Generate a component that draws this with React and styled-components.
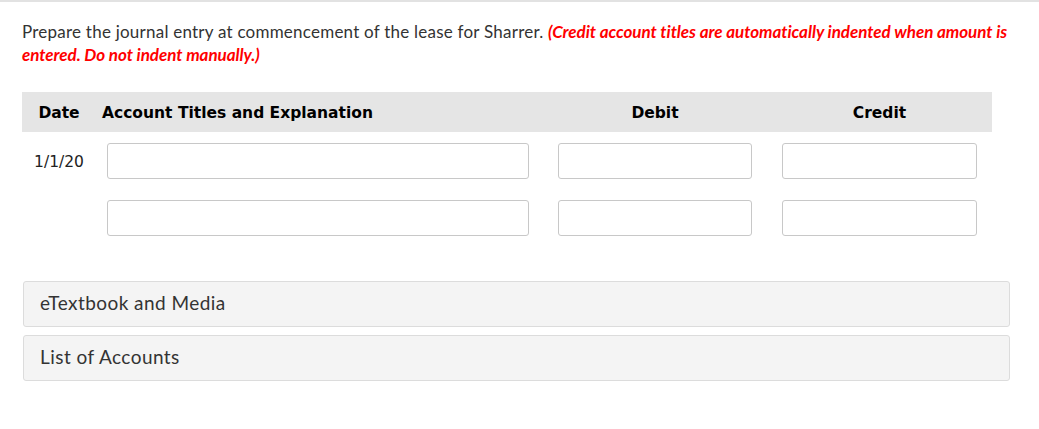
import React from "react";
import styled, { createGlobalStyle } from "styled-components";

const Global = createGlobalStyle`
  html, body { margin: 0; padding: 0; background: #fff; }
  body { font-family: Lato, "Open Sans", sans-serif; }
`;

const Page = styled.div`
  border-top: 2px solid #e2e2e2;
  padding: 18px 29px 40px 22px;
`;

const Prompt = styled.p`
  margin: 0 -8px 0 0;
  font-family: Lato, sans-serif;
  font-size: 17px;
  letter-spacing: 0.23px;
  line-height: 23px;
  color: #333;
`;

const Note = styled.span`
  color: #ff0000;
  font-weight: 700;
  font-style: italic;
  letter-spacing: -0.04px;
`;

const Table = styled.div`
  margin-top: 26px;
  width: 970px;
  display: grid;
  grid-template-columns: 74px 447px 224px 225px;
`;

const HeadCell = styled.div`
  background: #e5e5e5;
  height: 40px;
  box-sizing: border-box;
  padding-top: 2px;
  display: flex;
  align-items: center;
  justify-content: ${(p) => (p.$left ? "flex-start" : "center")};
  padding-left: ${(p) => (p.$left ? "6px" : "0")};
  font-family: "DejaVu Sans", sans-serif;
  font-weight: 700;
  font-size: 15.5px;
  color: #000;
`;

const DateCell = styled.div`
  height: 57px;
  display: flex;
  align-items: center;
  justify-content: center;
  padding-top: 3px;
  box-sizing: border-box;
  font-family: "DejaVu Sans", sans-serif;
  font-size: 15.5px;
  color: #222;
`;

const InputCell = styled.div`
  height: 57px;
  box-sizing: border-box;
  padding: 11px ${(p) => p.$right || 15}px 10px ${(p) => p.$left || 15}px;
`;

const Field = styled.input`
  display: block;
  width: 100%;
  height: 36px;
  box-sizing: border-box;
  border: 1px solid #c8c8c8;
  border-radius: 3px;
  background: #fff;
  outline: none;
  font-size: 14px;
`;

const Panels = styled.div`
  margin-top: 35px;
  margin-left: 1px;
  display: flex;
  flex-direction: column;
  gap: 8px;
`;

const Panel = styled.div`
  height: 46px;
  box-sizing: border-box;
  background: #f4f4f4;
  border: 1px solid #dcdcdc;
  border-radius: 3px;
  display: flex;
  align-items: center;
  padding: 0 0 3px 16px;
  font-family: Lato, sans-serif;
  font-size: 19px;
  letter-spacing: 0.45px;
  color: #333;
`;

const rows = ["1/1/20", ""];

export default function App() {
  return (
    <>
      <Global />
      <Page>
        <Prompt>
          Prepare the journal entry at commencement of the lease for Sharrer.{" "}
          <Note>
            (Credit account titles are automatically indented when amount is
            entered. Do not indent manually.)
          </Note>
        </Prompt>
        <Table>
          <HeadCell>Date</HeadCell>
          <HeadCell $left>Account Titles and Explanation</HeadCell>
          <HeadCell>Debit</HeadCell>
          <HeadCell>Credit</HeadCell>
          {rows.map((d, i) => (
            <React.Fragment key={i}>
              <DateCell>{d}</DateCell>
              <InputCell $left={11} $right={14}>
                <Field />
              </InputCell>
              <InputCell>
                <Field />
              </InputCell>
              <InputCell>
                <Field />
              </InputCell>
            </React.Fragment>
          ))}
        </Table>
        <Panels>
          <Panel>eTextbook and Media</Panel>
          <Panel>List of Accounts</Panel>
        </Panels>
      </Page>
    </>
  );
}
